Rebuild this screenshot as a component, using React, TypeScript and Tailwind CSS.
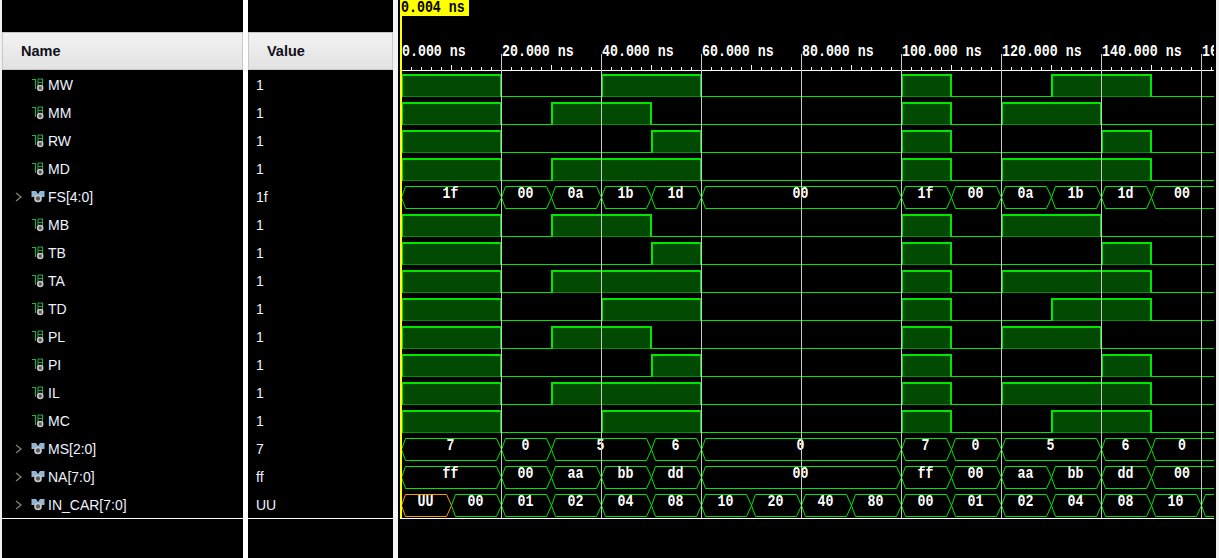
const ROW = 28;
const T = (ns: number) => 401 + ns * 5;
const END = 1214;
const A = [[0, 20], [40, 60], [100, 110], [130, 150]];
const B = [[0, 20], [30, 50], [100, 110], [120, 140]];
const C = [[0, 20], [50, 60], [100, 110], [140, 150]];
const D = [[0, 20], [30, 60], [100, 110], [120, 150]];
type Seg = [number, number, string, boolean?];
const mk = (times: number[], labels: string[]): Seg[] => labels.map((l, i) => [times[i], times[i + 1], l]);
const fsT = [0, 20, 30, 40, 50, 60, 100, 110, 120, 130, 140, 150, 164];
const msT = [0, 20, 30, 50, 60, 100, 110, 120, 140, 150, 164];
const carT = [0, 10, 20, 30, 40, 50, 60, 70, 80, 90, 100, 110, 120, 130, 140, 150, 160, 170];
const carSegs = mk(carT, ["UU", "00", "01", "02", "04", "08", "10", "20", "40", "80", "00", "01", "02", "04", "08", "10", ""]);
carSegs[0][3] = true;
type R = { name: string; value: string; high?: number[][]; segs?: Seg[] };
const rows: R[] = [
  { name: "MW", value: "1", high: A },
  { name: "MM", value: "1", high: B },
  { name: "RW", value: "1", high: C },
  { name: "MD", value: "1", high: D },
  { name: "FS[4:0]", value: "1f", segs: mk(fsT, ["1f", "00", "0a", "1b", "1d", "00", "1f", "00", "0a", "1b", "1d", "00"]) },
  { name: "MB", value: "1", high: B },
  { name: "TB", value: "1", high: C },
  { name: "TA", value: "1", high: D },
  { name: "TD", value: "1", high: A },
  { name: "PL", value: "1", high: B },
  { name: "PI", value: "1", high: C },
  { name: "IL", value: "1", high: D },
  { name: "MC", value: "1", high: A },
  { name: "MS[2:0]", value: "7", segs: mk(msT, ["7", "0", "5", "6", "0", "7", "0", "5", "6", "0"]) },
  { name: "NA[7:0]", value: "ff", segs: mk(fsT, ["ff", "00", "aa", "bb", "dd", "00", "ff", "00", "aa", "bb", "dd", "00"]) },
  { name: "IN_CAR[7:0]", value: "UU", segs: carSegs },
];

function BitIcon() {
  return (
    <svg width="14" height="14" viewBox="0 0 14 14" className="shrink-0">
      <path d="M1 1.5H4.5V11" fill="none" stroke="#2fa84a" strokeWidth="1.2" />
      <path d="M7 1H11.5V8M7 1V8M7 4.5H11.5" fill="none" stroke="#2fa84a" strokeWidth="1.1" />
      <circle cx="9.2" cy="10" r="2.5" fill="#555" stroke="#c8c8c8" strokeWidth="1.6" />
    </svg>
  );
}
function BusIcon() {
  return (
    <svg width="14" height="14" viewBox="0 0 14 14" className="shrink-0">
      <path d="M0.5 1H5L7 4L9 1H13.5V7H10.5L7 9L3.5 7H0.5Z" fill="#8fb6d6" />
      <circle cx="7" cy="8.5" r="3" fill="#5a5a5a" stroke="#c8c8c8" strokeWidth="1.7" />
    </svg>
  );
}

function Mono({ x, y, fill = "#fff", anchor = "start", children }: { x: number; y: number; fill?: string; anchor?: "start" | "middle"; children: string }) {
  return (
    <text
      transform={`translate(${x} ${y}) scale(0.83 1)`}
      textAnchor={anchor}
      fill={fill}
      fontSize="16"
      fontFamily="'Liberation Mono', monospace"
      className="font-bold"
      shapeRendering="auto"
    >
      {children}
    </text>
  );
}

function Wave() {
  const ticks: number[] = [];
  for (let i = 0; i <= 81; i++) ticks.push(i);
  const majors = [20, 40, 60, 80, 100, 120, 140, 160];
  const G = "#00e600";
  return (
    <svg width="818" height="558" viewBox="398 0 818 558" className="block" shapeRendering="crispEdges">
      <rect x="401" y="70" width={END - 401} height="1" fill="#fff" />
      {ticks.map((i) => {
        const x = 401 + i * 10;
        const tall = i % 5 === 0;
        return <rect key={i} x={x} y={tall ? 65 : 67} width="1" height={tall ? 5 : 3} fill="#fff" />;
      })}
      <svg x="398" y="0" width={END - 398} height="80" viewBox={`398 0 ${END - 398} 80`}>
        {[0, 20, 40, 60, 80, 100, 120, 140].map((n) => (
          <Mono key={n} x={T(n) + 1} y={56}>{`${n}.000 ns`}</Mono>
        ))}
        <Mono x={T(160) + 1} y={56}>16</Mono>
      </svg>
      {rows.map((r, idx) => {
        const top = 74 + idx * ROW;
        const bot = top + 22;
        if (r.high) {
          const h = r.high;
          return (
            <g key={idx}>
              {h.map(([a, b], i) => (
                <g key={i}>
                  <rect x={T(a)} y={top} width={(b - a) * 5} height={22} fill="#024a02" />
                  <rect x={T(a)} y={bot} width={(b - a) * 5} height={1} fill="#0a8a0a" />
                  <rect x={T(a)} y={top} width={(b - a) * 5} height={2} fill={G} />
                  <rect x={T(a)} y={top} width={2} height={23} fill={G} />
                  <rect x={T(b) - 1} y={top} width={2} height={23} fill={G} />
                </g>
              ))}
              {h.map(([, b], i) => {
                const next = i + 1 < h.length ? T(h[i + 1][0]) : END;
                return <rect key={"l" + i} x={T(b)} y={bot} width={next - T(b)} height={1} fill={G} />;
              })}
            </g>
          );
        }
        const segs = r.segs!;
        return (
          <g key={idx}>
            {segs.map(([a, b, l, u], i) => {
              const xa = T(a);
              const xb = T(b);
              const mid = (top + bot) / 2;
              const d = `M${xa + 0.5} ${mid + 0.5}L${xa + 4.5} ${top + 0.5}H${xb - 4.5}L${xb + 0.5} ${mid + 0.5}L${xb - 4.5} ${bot + 0.5}H${xa + 4.5}Z`;
              const cx = (xa + Math.min(xb, END)) / 2;
              return (
                <g key={i}>
                  <path d={d} fill="none" stroke={u ? "#ff9a00" : G} strokeWidth="1" shapeRendering="auto" />
                  {l ? (
                    <Mono x={cx - 0.5} y={top + 12} anchor="middle">
                      {l}
                    </Mono>
                  ) : null}
                </g>
              );
            })}
          </g>
        );
      })}
      {majors.map((n) => (
        <rect key={n} x={T(n)} y={54} width="1" height={518 - 54} fill="#c8c8c8" />
      ))}
      <rect x="1214" y="0" width="2" height="558" fill="#000" />
      <rect x="400" y="518" width={END - 400} height="1" fill="#fff" />
      <rect x="400" y="0" width="2" height="518" fill="#ffff00" />
      <rect x="400" y="0" width="69" height="16" fill="#ffff00" />
      <Mono x={401} y={12} fill="#000">0.004 ns</Mono>
    </svg>
  );
}

function Header({ label, pad }: { label: string; pad: string }) {
  return (
    <div className={`flex h-[38px] shrink-0 items-center border border-[#c8c8c8] bg-gradient-to-b from-[#f3f3f3] to-[#e2e2e3] pt-[2px] text-[14.5px] font-bold text-[#101018] ${pad}`}>
      {label}
    </div>
  );
}

export default function App() {
  const font = { fontFamily: "'Liberation Sans', Arial, sans-serif" };
  return (
    <div className="flex h-[558px] w-[1219px] overflow-hidden bg-[#f0f0f0]" style={font}>
      <div className="ml-[2px] flex w-[241px] flex-col bg-black">
        <div className="h-[32px] shrink-0" />
        <Header label="Name" pad="pl-[18px]" />
        <div className="flex flex-col border-b border-white">
          {rows.map((r) => (
            <div key={r.name} className="flex h-[28px] shrink-0 items-center pl-[13px] pt-[2px] text-[14px] text-[#eef3ff]">
              {r.segs ? (
                <svg width="8" height="10" viewBox="0 0 8 10" className="mr-[8px] shrink-0">
                  <path d="M1 1L6 5L1 9" fill="none" stroke="#808080" strokeWidth="1.3" />
                </svg>
              ) : (
                <span className="w-[16px]" />
              )}
              {r.segs ? <BusIcon /> : <BitIcon />}
              <span className="ml-[3px]">{r.name}</span>
            </div>
          ))}
        </div>
      </div>
      <div className="w-[5px] bg-white" />
      <div className="flex w-[145px] flex-col bg-black">
        <div className="h-[32px] shrink-0" />
        <Header label="Value" pad="pl-[18px]" />
        <div className="flex flex-col border-b border-white">
          {rows.map((r) => (
            <div key={r.name} className="flex h-[28px] shrink-0 items-center pl-[8px] pt-[2px] text-[14px] text-[#eef3ff]">
              {r.value}
            </div>
          ))}
        </div>
      </div>
      <div className="w-[5px] bg-[#f4f4f4]" />
      <div className="w-[818px] bg-black">
        <Wave />
      </div>
      <div className="flex-1 bg-[#f0f0f0]" />
    </div>
  );
}
